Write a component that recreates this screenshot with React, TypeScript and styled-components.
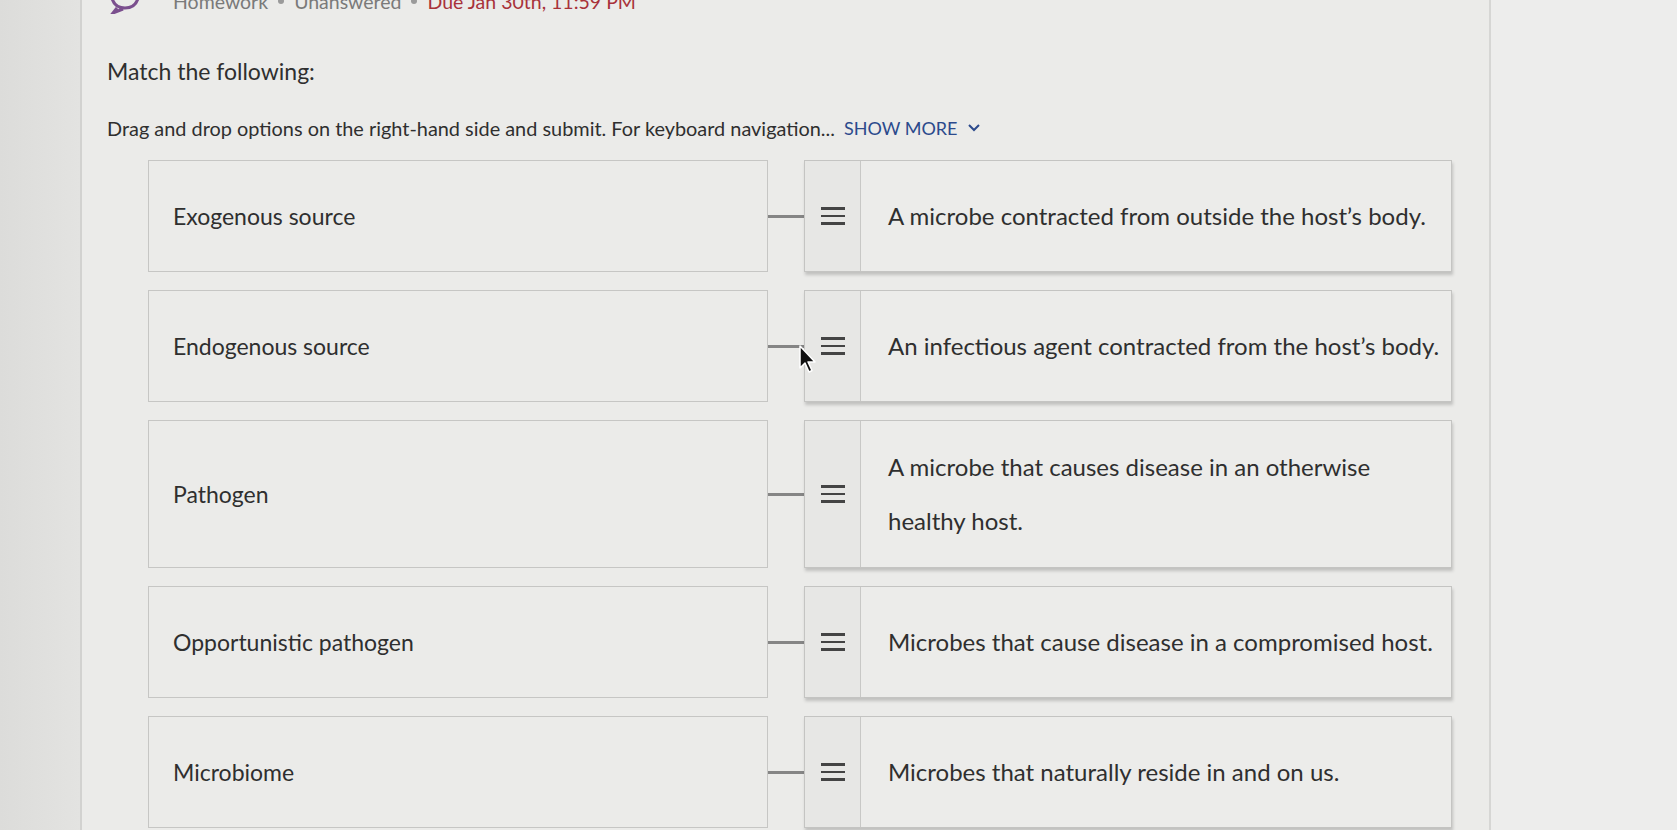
import { FC } from "react";
import styled, { createGlobalStyle } from "styled-components";

const GlobalStyle = createGlobalStyle`
  html, body {
    margin: 0;
    padding: 0;
    background: #e9e9e7;
    font-family: "Lato", "Noto Sans", sans-serif;
    color: #2f2f2f;
    overflow: hidden;
  }
`;

const Page = styled.div`
  display: flex;
  height: 830px;
  overflow: hidden;
`;

const Gutter = styled.div`
  width: 80px;
  flex: none;
  background: linear-gradient(90deg, #dcdcda 0%, #e3e3e1 100%);
`;

const Panel = styled.main`
  width: 1411px;
  flex: none;
  background: #ebebe9;
  border-left: 2px solid #d2d2d0;
  border-right: 2px solid #d6d6d4;
  padding-left: 25px;
  box-sizing: border-box;
`;

const Aside = styled.div`
  flex: 1;
  background: #ededec;
`;

const Meta = styled.div`
  display: flex;
  align-items: center;
  gap: 10px;
  margin-top: -12px;
  height: 26px;
  font-size: 19.5px;
  color: #7a7a7a;
`;

const MetaIcon = styled.svg`
  width: 36px;
  height: 26px;
  margin-right: 20px;
`;

const Dot = styled.span`
  width: 6px;
  height: 6px;
  border-radius: 50%;
  background: #9a9a9a;
`;

const Due = styled.span`
  color: #a8323a;
`;

const Title = styled.h1`
  margin: 43px 0 0;
  font-size: 23px;
  font-weight: 400;
  line-height: 28px;
  color: #2f2f2f;
`;

const Instructions = styled.p`
  margin: 31px 0 0;
  font-size: 19.9px;
  line-height: 24px;
  display: flex;
  align-items: center;
`;

const ShowMore = styled.button`
  display: inline-flex;
  align-items: center;
  gap: 10px;
  margin-left: 9px;
  padding: 0;
  border: none;
  background: none;
  font: inherit;
  font-size: 18px;
  color: #2c4a8c;
  text-transform: uppercase;
`;

const Rows = styled.div`
  display: flex;
  flex-direction: column;
  gap: 18px;
  margin: 20px 0 0 41px;
`;

const Row = styled.div`
  display: grid;
  grid-template-columns: 620px 36px 648px;
  position: relative;
`;

const Prompt = styled.div`
  display: flex;
  align-items: center;
  padding: 0 24px;
  border: 1.5px solid #c6c6c4;
  font-size: 23px;
  color: #2f2f2f;
`;

const Connector = styled.div`
  display: flex;
  align-items: center;
  &::before {
    content: "";
    width: 100%;
    height: 3px;
    background: #858585;
  }
`;

const Answer = styled.div<{ $tall?: boolean }>`
  display: flex;
  min-height: ${p => (p.$tall ? 146 : 110)}px;
  border: 1.5px solid #c4c4c2;
  box-shadow: 1px 3px 3px rgba(0, 0, 0, 0.18);
  background: #ececea;
`;

const Handle = styled.div`
  width: 55px;
  flex: none;
  display: flex;
  align-items: center;
  justify-content: center;
  border-right: 1.5px solid #c8c8c6;
  background: #e7e7e5;
`;

const Grip = styled.span`
  display: flex;
  flex-direction: column;
  gap: 5px;
  width: 24px;
  & > i {
    height: 2.5px;
    background: #444;
  }
`;

const AnswerText = styled.div`
  flex: 1;
  display: flex;
  align-items: center;
  padding: 18px 6px 18px 27px;
  font-size: 24px;
  line-height: 54px;
  color: #2f2f2f;
`;

const Cursor = styled.svg`
  position: absolute;
  left: 650px;
  top: 54px;
  width: 20px;
  height: 30px;
`;

const pairs: { term: string; definition: string }[] = [
  { term: "Exogenous source", definition: "A microbe contracted from outside the host\u2019s body." },
  { term: "Endogenous source", definition: "An infectious agent contracted from the host\u2019s body." },
  { term: "Pathogen", definition: "A microbe that causes disease in an otherwise healthy host." },
  { term: "Opportunistic pathogen", definition: "Microbes that cause disease in a compromised host." },
  { term: "Microbiome", definition: "Microbes that naturally reside in and on us." },
];

const DragGrip: FC = () => (
  <Grip>
    <i />
    <i />
    <i />
  </Grip>
);

export default function App() {
  return (
    <>
      <GlobalStyle />
      <Page>
        <Gutter />
        <Panel>
          <Meta>
            <MetaIcon viewBox="0 0 36 26">
              <path d="M4 2 Q4 20 18 20 Q32 20 32 2 M10 20 L6 25 L16 21" fill="none" stroke="#7b4f8e" strokeWidth="3" />
            </MetaIcon>
            Homework <Dot /> Unanswered <Dot /> <Due>Due Jan 30th, 11:59 PM</Due>
          </Meta>
          <Title>Match the following:</Title>
          <Instructions>
            Drag and drop options on the right-hand side and submit. For keyboard navigation...
            <ShowMore>
              Show more
              <svg width="14" height="10" viewBox="0 0 14 10">
                <path d="M2 2 L7 7 L12 2" fill="none" stroke="#2c4a8c" strokeWidth="2" />
              </svg>
            </ShowMore>
          </Instructions>
          <Rows>
            {pairs.map(({ term, definition }, i) => (
              <Row key={term}>
                <Prompt>{term}</Prompt>
                <Connector />
                <Answer $tall={i === 2}>
                  <Handle>
                    <DragGrip />
                  </Handle>
                  <AnswerText>{definition}</AnswerText>
                </Answer>
                {i === 1 && (
                  <Cursor viewBox="0 0 20 30">
                    <path d="M2 2 L2 24 L7 19 L11 28 L14 26.5 L10 18 L17 18 Z" fill="#111" stroke="#fff" strokeWidth="1.5" strokeLinejoin="round" />
                  </Cursor>
                )}
              </Row>
            ))}
          </Rows>
        </Panel>
        <Aside />
      </Page>
    </>
  );
}
